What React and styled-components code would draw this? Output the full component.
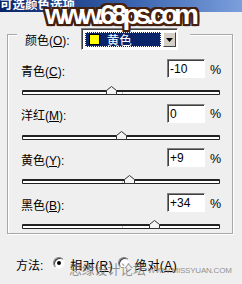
import React from "react"
import styled, { createGlobalStyle } from "styled-components"

const GlobalStyle = createGlobalStyle`
  html, body {
    margin: 0;
    padding: 0;
    background: #efefef;
  }
`

const Window = styled.div`
  position: relative;
  width: 242px;
  height: 284px;
  overflow: hidden;
  background: #efefef;
  font-family: "Liberation Sans", "Noto Sans CJK SC", sans-serif;
  font-size: 12px;
  color: #000;
`

const TitleBar = styled.div`
  height: 12px;
  overflow: hidden;
  background: linear-gradient(to right, #0a246a 0%, #3a64b0 55%, #7c9fdc 100%);
  color: #fff;
  font-family: "Noto Sans CJK SC", sans-serif;
  font-weight: bold;
  font-size: 12.5px;
  line-height: 8px;
  white-space: nowrap;
`

const SiteMark = styled.div`
  position: absolute;
  left: 45px;
  top: 1px;
  font-family: "Liberation Sans", sans-serif;
  font-weight: bold;
  font-size: 28px;
  line-height: 28px;
  letter-spacing: -4.3px;
  color: #fff;
  text-shadow:
    2px 0 0 #45200e, -2px 0 0 #45200e, 0 2px 0 #45200e, 0 -2px 0 #45200e,
    2px 2px 0 #45200e, -2px -2px 0 #45200e, 2px -2px 0 #45200e, -2px 2px 0 #45200e,
    1px 2px 1px #45200e, -1px 2px 1px #45200e;
`

const GroupBox = styled.div`
  margin: 22px 9px 0 7px;
  height: 198px;
  border: 1px solid #a8a8a8;
  box-shadow: 1px 1px 0 #fff, inset 1px 1px 0 #fff;
  display: flex;
  flex-direction: column;
`

const Header = styled.div`
  align-self: flex-start;
  margin: -7px 0 0 9px;
  padding: 0 12px 0 8px;
  height: 22px;
  background: #efefef;
  display: flex;
  align-items: center;
  gap: 11px;
`

const U = styled.span`
  text-decoration: underline;
`

const Dropdown = styled.div`
  box-sizing: border-box;
  width: 97px;
  height: 22px;
  border: 1px solid;
  border-color: #808080 #fff #fff #808080;
  box-shadow: inset 1px 1px 0 #404040;
  background: #fff;
  padding: 3px 1px 2px 3px;
  display: flex;
  gap: 2px;
`

const Selected = styled.div`
  flex: 1;
  background: #0a246a;
  outline: 1px dotted #fff;
  outline-offset: -1px;
  display: flex;
  align-items: center;
  padding-left: 4px;
  gap: 7px;
  color: #fff;
  font-size: 12.5px;
`

const Swatch = styled.span`
  width: 11px;
  height: 11px;
  background: #ffff00;
  border: 1px solid #000;
  box-sizing: border-box;
`

const ArrowButton = styled.div`
  width: 13px;
  box-sizing: border-box;
  background: #d4d0c8;
  border: 1px solid;
  border-color: #fff #404040 #404040 #fff;
  display: flex;
  align-items: center;
  justify-content: center;
`

const Rows = styled.div`
  margin-top: 9px;
  display: flex;
  flex-direction: column;
`

const Row = styled.div`
  height: 44.7px;
  display: flex;
  flex-direction: column;
`

const FieldLine = styled.div`
  display: flex;
  align-items: center;
  height: 19px;
  padding-left: 13px;
`

const Label = styled.span`
  flex: 1;
  padding-top: 3px;
`

const NumberBox = styled.div`
  box-sizing: border-box;
  width: 38px;
  height: 19px;
  border: 1px solid;
  border-color: #808080 #fff #fff #808080;
  box-shadow: inset 1px 1px 0 #404040;
  background: #fff;
  padding: 3px 0 0 2px;
  font-size: 12px;
  line-height: 13px;
`

const Percent = styled.span`
  width: 22px;
  padding-left: 5px;
  padding-top: 2px;
  font-size: 12.5px;
`

const SliderArea = styled.div`
  position: relative;
  margin: 8px 0 0 14px;
  width: 198px;
  height: 9px;
`

const Track = styled.div`
  position: absolute;
  left: 0;
  right: 0;
  bottom: 0;
  height: 5px;
  box-sizing: border-box;
  background: #fff;
  border: 1px solid #222;
  border-top-width: 2px;
  border-radius: 1px;
`

const CenterTick = styled.div`
  position: absolute;
  left: 99px;
  top: 0;
  width: 1px;
  height: 100%;
  background: #c8c8c8;
`

const Thumb = styled.svg`
  position: absolute;
  bottom: 0;
  width: 11px;
  height: 9px;
`

const MethodLine = styled.div`
  margin-top: 21px;
  padding-left: 16px;
  display: flex;
  align-items: center;
  height: 18px;
`

const RadioItem = styled.label`
  display: flex;
  align-items: center;
  gap: 5px;
  margin-left: ${(p) => p.$gap}px;
  letter-spacing: 0.4px;
`

const RadioDot = styled.span`
  box-sizing: border-box;
  width: 12px;
  height: 12px;
  border-radius: 50%;
  margin-top: -3px;
  background: #fff;
  border: 1px solid;
  border-color: #808080 #f4f4f4 #f4f4f4 #808080;
  box-shadow: inset 1px 1px 0 #404040;
  display: flex;
  align-items: center;
  justify-content: center;

  &::after {
    content: "";
    width: 4px;
    height: 4px;
    border-radius: 50%;
    background: ${(p) => (p.$checked ? "#000" : "transparent")};
  }
`

const ForumMark = styled.div`
  position: absolute;
  left: 69px;
  top: 262px;
  display: flex;
  align-items: center;
  gap: 2px;
  color: rgba(110, 110, 110, 0.75);
  white-space: nowrap;
`

const ForumName = styled.span`
  font-family: "Noto Sans CJK SC", sans-serif;
  font-size: 12.8px;
  line-height: 14px;
`

const ForumUrl = styled.span`
  font-family: "Liberation Sans", sans-serif;
  font-size: 8px;
  letter-spacing: -0.2px;
  padding-top: 3px;
`

const colors = [
  { name: "青色", key: "C", value: -10 },
  { name: "洋红", key: "M", value: 0 },
  { name: "黄色", key: "Y", value: 9 },
  { name: "黑色", key: "B", value: 34 },
]

const formatValue = (v) => (v > 0 ? `+${v}` : `${v}`)

const Slider = ({ value }) => (
  <SliderArea>
    <Track>
      <CenterTick />
    </Track>
    <Thumb viewBox="0 0 11 9" style={{ left: 99 + value * 0.99 - 5.5 }}>
      <polygon
        points="0.5,8.5 0.5,4.5 5.5,0.5 10.5,4.5 10.5,8.5"
        fill="#f4f4f4"
        stroke="#333"
        strokeWidth="1"
      />
    </Thumb>
  </SliderArea>
)

const App = () => (
  <Window>
    <GlobalStyle />
    <TitleBar>可选颜色选项</TitleBar>
    <GroupBox>
      <Header>
        <span>
          颜色(<U>O</U>):
        </span>
        <Dropdown>
          <Selected>
            <Swatch />
            黄色
          </Selected>
          <ArrowButton>
            <svg width="7" height="4" viewBox="0 0 7 4">
              <polygon points="0,0 7,0 3.5,4" fill="#000" />
            </svg>
          </ArrowButton>
        </Dropdown>
      </Header>
      <Rows>
        {colors.map((c) => (
          <Row key={c.key}>
            <FieldLine>
              <Label>
                {c.name}(<U>{c.key}</U>):
              </Label>
              <NumberBox>{formatValue(c.value)}</NumberBox>
              <Percent>%</Percent>
            </FieldLine>
            <Slider value={c.value} />
          </Row>
        ))}
      </Rows>
    </GroupBox>
    <MethodLine>
      <span>方法:</span>
      <RadioItem $gap={10}>
        <RadioDot $checked />
        <span>
          相对(<U>R</U>)
        </span>
      </RadioItem>
      <RadioItem $gap={5}>
        <RadioDot />
        <span>
          绝对(<U>A</U>)
        </span>
      </RadioItem>
    </MethodLine>
    <SiteMark>www.68ps.com</SiteMark>
    <ForumMark>
      <ForumName>思缘设计论坛</ForumName>
      <ForumUrl>WWW.MISSYUAN.COM</ForumUrl>
    </ForumMark>
  </Window>
)

export default App
